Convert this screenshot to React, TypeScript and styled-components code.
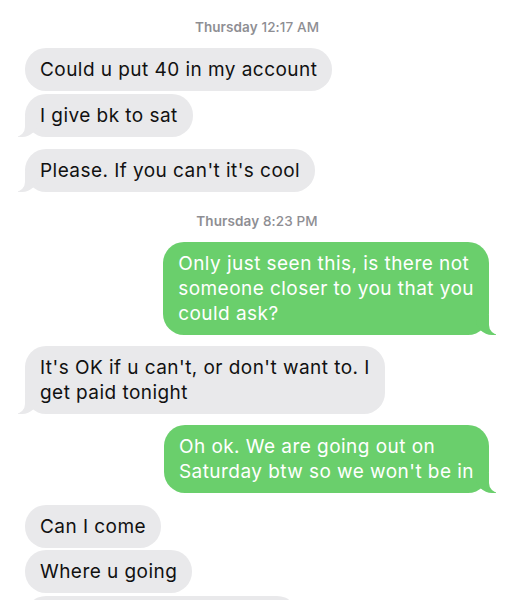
import styled, { createGlobalStyle, css } from "styled-components";

const GlobalStyle = createGlobalStyle`
    html, body {
        margin: 0;
        padding: 0;
        background: #ffffff;
    }
    body {
        font-family: Inter, "Liberation Sans", Arial, sans-serif;
        -webkit-font-smoothing: antialiased;
    }
`

const Thread = styled.div`
    display: flex;
    flex-direction: column;
    padding: 18px 25px 0 25px;
    width: 514px;
    box-sizing: border-box;
    height: 600px;
    overflow: hidden;
`

const Stamp = styled.div`
    text-align: center;
    font-size: 13.5px;
    line-height: 18px;
    letter-spacing: 0.1px;
    color: #8e8e93;
    font-weight: 500;
    margin-bottom: 12px;

    b {
        font-weight: 600;
    }
`

const Bubble = styled.div<{ $me?: boolean; $tail?: boolean; $gap: number }>`
    position: relative;
    align-self: ${(p) => (p.$me ? "flex-end" : "flex-start")};
    background: ${(p) => (p.$me ? "#6acf6c" : "#e9e9eb")};
    color: ${(p) => (p.$me ? "#ffffff" : "#111111")};
    font-size: 19px;
    line-height: 25px;
    letter-spacing: 0.45px;
    padding: 9px 15px;
    border-radius: 21px;
    margin-bottom: ${(p) => p.$gap}px;
    white-space: nowrap;

    ${(p) =>
        p.$tail &&
        css`
            &::before {
                content: "";
                position: absolute;
                bottom: 0;
                ${p.$me ? "right: -7px;" : "left: -7px;"}
                width: 20px;
                height: 20px;
                background: ${p.$me ? "#6acf6c" : "#e9e9eb"};
                ${p.$me ? "border-bottom-left-radius: 16px;" : "border-bottom-right-radius: 16px;"}
            }
            &::after {
                content: "";
                position: absolute;
                bottom: 0;
                ${p.$me ? "right: -10px;" : "left: -10px;"}
                width: 10px;
                height: 20px;
                background: #ffffff;
                ${p.$me ? "border-bottom-left-radius: 10px;" : "border-bottom-right-radius: 10px;"}
            }
        `}
`

type Msg =
    | { kind: "stamp"; day: string; time: string }
    | { kind: "msg"; me?: boolean; tail?: boolean; gap: number; lines: string[] }

const thread: Msg[] = [
    { kind: "stamp", day: "Thursday", time: "12:17 AM" },
    { kind: "msg", gap: 3, lines: ["Could u put 40 in my account"] },
    { kind: "msg", tail: true, gap: 12, lines: ["I give bk to sat"] },
    { kind: "msg", tail: true, gap: 20, lines: ["Please. If you can't it's cool"] },
    { kind: "stamp", day: "Thursday", time: "8:23 PM" },
    {
        kind: "msg",
        me: true,
        tail: true,
        gap: 11,
        lines: ["Only just seen this, is there not", "someone closer to you that you", "could ask?"],
    },
    { kind: "msg", tail: true, gap: 11, lines: ["It's OK if u can't, or don't want to. I", "get paid tonight"] },
    { kind: "msg", me: true, tail: true, gap: 12, lines: ["Oh ok. We are going out on", "Saturday btw so we won't be in"] },
    { kind: "msg", gap: 2, lines: ["Can I come"] },
    { kind: "msg", gap: 3, lines: ["Where u going"] },
    { kind: "msg", tail: true, gap: 3, lines: ["What time are u going out"] },
]

export default function App() {
    return (
        <>
            <GlobalStyle />
            <Thread>
                {thread.map((m, i) =>
                    m.kind === "stamp" ? (
                        <Stamp key={i}>
                            <b>{m.day}</b> {m.time}
                        </Stamp>
                    ) : (
                        <Bubble key={i} $me={m.me} $tail={m.tail} $gap={m.gap}>
                            {m.lines.map((l, j) => (
                                <div key={j}>{l}</div>
                            ))}
                        </Bubble>
                    )
                )}
            </Thread>
        </>
    )
}
